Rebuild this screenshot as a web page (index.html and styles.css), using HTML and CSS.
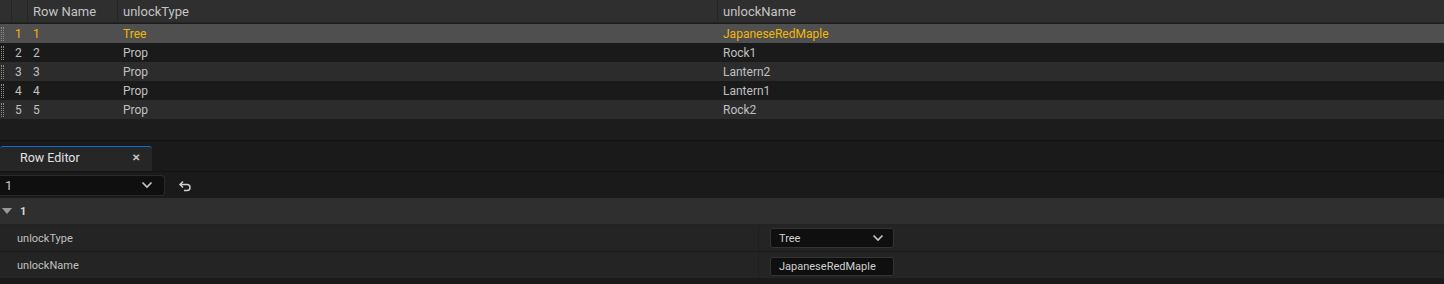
FILE: index.html
```html
<!DOCTYPE html>
<html>
<head>
  <title>Data Table</title>
  <link rel="stylesheet" href="styles.css">
</head>
<body>
  <div class="table">
    <div class="row head">
      <div class="c grip"></div>
      <div class="c idx"></div>
      <div class="c rname">Row Name</div>
      <div class="c ctype">unlockType</div>
      <div class="c cname">unlockName</div>
    </div>
    <div class="row sel">
      <div class="c grip"><span class="dots"></span></div>
      <div class="c idx">1</div>
      <div class="c rname">1</div>
      <div class="c ctype">Tree</div>
      <div class="c cname">JapaneseRedMaple</div>
    </div>
    <div class="row odd">
      <div class="c grip"><span class="dots"></span></div>
      <div class="c idx">2</div>
      <div class="c rname">2</div>
      <div class="c ctype">Prop</div>
      <div class="c cname">Rock1</div>
    </div>
    <div class="row even">
      <div class="c grip"><span class="dots"></span></div>
      <div class="c idx">3</div>
      <div class="c rname">3</div>
      <div class="c ctype">Prop</div>
      <div class="c cname">Lantern2</div>
    </div>
    <div class="row odd">
      <div class="c grip"><span class="dots"></span></div>
      <div class="c idx">4</div>
      <div class="c rname">4</div>
      <div class="c ctype">Prop</div>
      <div class="c cname">Lantern1</div>
    </div>
    <div class="row even">
      <div class="c grip"><span class="dots"></span></div>
      <div class="c idx">5</div>
      <div class="c rname">5</div>
      <div class="c ctype">Prop</div>
      <div class="c cname">Rock2</div>
    </div>
  </div>

  <div class="tabbar">
    <div class="tab">
      <span>Row Editor</span>
      <span class="close">&#x2715;</span>
    </div>
  </div>

  <div class="toolbar">
    <div class="combo">
      <span>1</span>
      <svg width="12" height="8" viewBox="0 0 12 8"><path d="M1.5 1.5 L6 6 L10.5 1.5" fill="none" stroke="#c8c8c8" stroke-width="1.6"/></svg>
    </div>
    <svg class="undo" width="14" height="12" viewBox="0 0 14 12"><path d="M5 1.5 L2 4.5 L5 7.5 M2 4.5 H9 A3 3 0 0 1 9 10.5 H6" fill="none" stroke="#d0d0d0" stroke-width="1.5"/></svg>
  </div>

  <div class="category">
    <svg width="10" height="7" viewBox="0 0 10 7"><path d="M0 0 H10 L5 6 Z" fill="#9a9a9a"/></svg>
    <span>1</span>
  </div>
  <div class="prop">
    <div class="pname">unlockType</div>
    <div class="pval">
      <div class="field drop">
        <span>Tree</span>
        <svg width="12" height="8" viewBox="0 0 12 8"><path d="M1.5 1.5 L6 6 L10.5 1.5" fill="none" stroke="#c8c8c8" stroke-width="1.6"/></svg>
      </div>
    </div>
  </div>
  <div class="prop">
    <div class="pname">unlockName</div>
    <div class="pval">
      <div class="field text">JapaneseRedMaple</div>
    </div>
  </div>
</body>
</html>
```

FILE: styles.css
```css
body {
  margin: 0;
  background-color: #1a1a1a;
  font-family: Roboto, "Liberation Sans", sans-serif;
  font-size: 12px;
  color: #c0c0c0;
}
.table {
  height: 140px;
  background-color: #1c1c1c;
  border-bottom: 1px solid #111;
}
.row {
  display: grid;
  grid-template-columns: 12px 16px 90px 600px 1fr;
  height: 19px;
}
.row.head {
  height: 23px;
  margin-bottom: 1px;
  background-color: #2f2f2f;
  border-bottom: 1px solid #262626;
  box-sizing: border-box;
  font-size: 13px;
  color: #c4c4c4;
}
.row.sel {
  background-color: #4f4f4f;
  color: #f2b705;
}
.row.odd {
  background-color: #1a1a1a;
}
.row.even {
  background-color: #2c2c2c;
}
.c {
  display: flex;
  align-items: center;
  box-sizing: border-box;
  white-space: nowrap;
}
.idx {
  padding-left: 3px;
}
.rname,
.ctype,
.cname {
  padding-left: 5px;
}
.head .grip,
.head .idx,
.head .rname,
.head .ctype {
  border-right: 1px solid #252525;
}
.dots {
  display: block;
  width: 1px;
  height: 14px;
  margin-left: 1px;
  border-left: 1px dotted #8a8a8a;
  border-right: 1px dotted #8a8a8a;
}
.tabbar {
  height: 30px;
  display: flex;
  align-items: flex-end;
  background-color: #1a1a1a;
  border-bottom: 1px solid #121212;
}
.tab {
  width: 152px;
  height: 25px;
  box-sizing: border-box;
  display: flex;
  align-items: center;
  justify-content: space-between;
  padding: 0 12px 3px 20px;
  background-color: #262626;
  border-top: 1px solid #0a6fd1;
  border-radius: 3px 3px 0 0;
  color: #e0e0e0;
  font-size: 12.5px;
}
.close {
  font-size: 10px;
  font-weight: bold;
  color: #c8c8c8;
}
.toolbar {
  height: 26px;
  display: flex;
  align-items: center;
  gap: 13px;
}
.combo {
  width: 165px;
  height: 21px;
  box-sizing: border-box;
  display: flex;
  align-items: center;
  justify-content: space-between;
  padding: 0 11px 0 5px;
  background-color: #0f0f0f;
  border: 1px solid #2a2a2a;
  border-left: none;
  border-radius: 0 4px 4px 0;
  color: #c8c8c8;
  font-size: 13px;
}
.undo {
  margin-top: 1px;
}
.category {
  height: 26px;
  display: flex;
  align-items: center;
  gap: 8px;
  padding-left: 2px;
  background-color: #2f2f2f;
  border-bottom: 1px solid #222;
  color: #d8d8d8;
  font-weight: bold;
  font-size: 11px;
}
.prop {
  display: flex;
  height: 26px;
  background-color: #242424;
  border-bottom: 1px solid #1a1a1a;
  font-size: 11px;
}
.pname {
  width: 758px;
  padding-left: 17px;
  display: flex;
  align-items: center;
  box-sizing: border-box;
  color: #c0c0c0;
}
.pval {
  flex: 1;
  display: flex;
  align-items: center;
  padding-left: 11px;
  border-left: 1px solid #1e1e1e;
}
.field {
  width: 124px;
  height: 20px;
  box-sizing: border-box;
  display: flex;
  align-items: center;
  justify-content: space-between;
  padding: 0 9px 0 8px;
  background-color: #0f0f0f;
  border: 1px solid #333;
  border-radius: 3px;
  color: #d0d0d0;
}
.field.text {
  height: 19px;
  margin-top: 2px;
}
```
